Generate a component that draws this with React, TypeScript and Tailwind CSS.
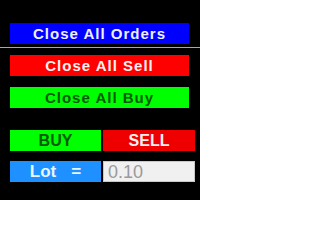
export default function App() {
  const btn =
    "flex items-center justify-center h-[21px] text-[15px] font-bold tracking-[1px] leading-none";
  return (
    <div className="w-[200px] h-[200px] bg-black overflow-hidden font-['Liberation_Sans',Arial,sans-serif]">
      <div className="pt-[23px] flex flex-col">
        <div className={`${btn} ml-[10px] w-[179px] bg-[#0000ff] text-[#eef0ff]`}>Close All Orders</div>
        <div className="mt-[3px] h-px w-full bg-[#a8a8a8]" />
        <div className={`${btn} mt-[7px] ml-[10px] w-[179px] bg-[#ff0000] text-[#fff0f0]`}>Close All Sell</div>
        <div className={`${btn} mt-[11px] ml-[10px] w-[179px] bg-[#00ff00] text-[#005a00]`}>Close All Buy</div>

        <div className="mt-[22px] ml-[10px] flex gap-[2px]">
          <div className="flex items-center justify-center w-[91px] h-[21px] bg-[#00ff00] text-[#005a00] text-[16px] font-bold leading-none">
            BUY
          </div>
          <div className="flex items-center justify-center w-[92px] h-[21px] bg-[#ee0000] text-[#fff0f0] text-[16px] font-bold leading-none">
            SELL
          </div>
        </div>

        <div className="mt-[10px] ml-[10px] flex gap-[2px]">
          <div className="flex items-center justify-center gap-[15px] w-[91px] h-[21px] bg-[#1e90ff] text-[#e8f4ff] text-[17px] font-bold leading-none">
            <span>Lot</span>
            <span>=</span>
          </div>
          <div className="flex items-center w-[92px] h-[21px] bg-[#f0f0f0] border border-[#c8c8c8] pl-[4px] text-[18px] text-[#9a9a9a] leading-none">
            0.10
          </div>
        </div>
      </div>
    </div>
  );
}
